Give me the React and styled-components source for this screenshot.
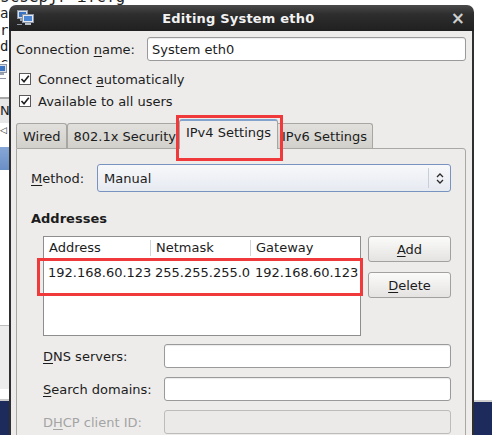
import React from 'react';
import styled, { createGlobalStyle } from 'styled-components';

const Global = createGlobalStyle`
  html, body { margin: 0; padding: 0; background: #fff; }
  body {
    width: 492px; height: 435px; overflow: hidden;
    font-family: "DejaVu Sans", "Liberation Sans", sans-serif;
    font-size: 13px; color: #1c1c1c;
  }
`;

const Desktop = styled.div`
  width: 492px; height: 435px; overflow: hidden;
  display: flex; flex-direction: column; background: #fff;
`;

const TermTop = styled.div`
  height: 5px; overflow: hidden; flex: none;
  font-family: "DejaVu Sans Mono", "Liberation Mono", monospace;
  font-size: 16px; line-height: 16px; color: #222; white-space: pre;
  span { display: block; margin-top: -11px; }
`;

const Stage = styled.div`
  display: flex; flex: 1; min-height: 0; overflow: hidden;
`;

const LeftStrip = styled.div`
  width: 9px; flex: none; overflow: hidden;
  display: flex; flex-direction: column;
`;

const TermLines = styled.div`
  height: 57px; overflow: hidden; flex: none;
  font-family: "DejaVu Sans Mono", "Liberation Mono", monospace;
  font-size: 14px; line-height: 16.5px; color: #222; white-space: pre;
`;

const Band = styled.div`
  flex: ${p => (p.$fill ? '1' : 'none')};
  height: ${p => (p.$h ? `${p.$h}px` : 'auto')};
  background: ${p => p.$bg || '#fff'};
  overflow: hidden;
  font-size: 13px; line-height: ${p => (p.$h ? `${p.$h}px` : 'normal')};
  color: #222;
`;

const RightStrip = styled.div`
  flex: 1; display: flex; flex-direction: column;
`;

const Window = styled.div`
  width: 465px; flex: none; display: flex; flex-direction: column;
  overflow: hidden;
`;

const TitleBar = styled.div`
  height: 26px; flex: none;
  display: flex; align-items: center;
  padding: 0 9px 0 8px;
  border-radius: 7px 7px 0 0;
  background: linear-gradient(#4a4a4a 0%, #2e2e2e 35%, #202020 100%);
`;

const TitleText = styled.div`
  flex: 1; text-align: center;
  color: #f2f2f2; font-weight: bold; font-size: 13px;
  letter-spacing: 0.2px;
  padding-right: 8px;
`;

const Close = styled.div`
  color: #cfcfcf; font-size: 17px; font-weight: bold; line-height: 1;
  margin-top: 1px;
`;

const Body = styled.div`
  flex: 1;
  background: #edeceb;
  border-left: 2px solid #2f2f2f;
  border-right: 2px solid #2f2f2f;
  padding: 6px 6px 0 5px;
  display: flex; flex-direction: column;
`;

const FormRow = styled.div`
  display: flex; align-items: center; height: ${p => p.$h || 24}px;
`;

const Label = styled.div`
  width: ${p => p.$w}px; flex: none; white-space: nowrap;
  color: ${p => (p.$disabled ? '#a4a4a4' : '#1c1c1c')};
  font-weight: ${p => (p.$bold ? 'bold' : 'normal')};
`;

const Mn = styled.span`
  text-decoration: underline; text-underline-offset: 2px;
`;

const Entry = styled.div`
  flex: 1; height: 24px; box-sizing: border-box;
  border: 1px solid ${p => (p.$disabled ? '#bdbcba' : '#9a9a9a')};
  border-radius: 3px;
  background: ${p => (p.$disabled ? '#ebeae8' : '#fff')};
  box-shadow: ${p => (p.$disabled ? 'none' : 'inset 0 1px 1px rgba(0,0,0,0.08)')};
  display: flex; align-items: center; padding-left: 4px;
  white-space: nowrap;
`;

const Spacer = styled.div`
  height: ${p => p.$h}px; flex: none;
`;

const CheckRow = styled.div`
  display: flex; align-items: center; height: 22px; padding-left: 3px; gap: 7px;
`;

const Box = styled.div`
  width: 12px; height: 12px; box-sizing: border-box;
  border: 1px solid #5a5a5a; background: #fff;
  display: flex; align-items: center; justify-content: center;
`;

const Notebook = styled.div`
  margin-top: 7px; display: flex; flex-direction: column;
`;

const TabStrip = styled.div`
  display: flex; align-items: flex-end; height: 29px;
`;

const Tab = styled.div`
  position: relative; box-sizing: border-box; white-space: nowrap;
  border: 1px solid #a7a6a3; border-bottom: none;
  border-radius: 3px 3px 0 0;
  ${p => p.$active ? `
    z-index: 2;
    height: 30px; margin: 0 -3px -1px -3px; padding: 0 6px 0 6px;
    border-top: 2px solid #84a3cc;
    background: #edeceb;
    line-height: 24px;
  ` : `
    z-index: 1;
    height: 25px; padding: 0 5px 0 6px;
    background: linear-gradient(#e2e0dc, #d2d0cb);
    line-height: 25px;
  `}
`;

const Annotation = styled.div`
  position: absolute; box-sizing: border-box;
  border: 3px solid #f0393b;
  left: ${p => p.$l}px; right: ${p => p.$r}px; top: ${p => p.$t}px; height: ${p => p.$h}px;
  pointer-events: none; z-index: 5;
`;

const Panel = styled.div`
  border: 1px solid #a9a8a5; border-radius: 0 3px 0 0;
  background: #edeceb;
  padding: 15px 14px 30px 14px;
  display: flex; flex-direction: column;
`;

const Combo = styled.div`
  flex: 1; height: 28px; box-sizing: border-box;
  border: 1px solid #7893bf; border-radius: 3px;
  background: linear-gradient(#f7f8fa, #e6eaf1);
  display: flex; align-items: center;
`;

const ComboText = styled.div`
  flex: 1; padding-left: 6px;
`;

const ComboSep = styled.div`
  width: 1px; height: 20px; background: #c9cfd8;
`;

const ComboArrows = styled.div`
  width: 21px; display: flex; align-items: center; justify-content: center;
`;

const Heading = styled.div`
  margin-top: 19px; font-weight: bold; line-height: 16px;
`;

const AddrRow = styled.div`
  margin-top: 9px; padding-left: 12px; display: flex; gap: 7px;
`;

const Table = styled.div`
  position: relative; width: 318px; height: 100px; box-sizing: border-box;
  border: 1px solid #8e8e8e; background: #fff;
`;

const TRow = styled.div`
  display: grid; grid-template-columns: 107px 100px 1fr;
  height: ${p => p.$h}px; align-items: center;
  white-space: nowrap;
`;

const HCell = styled.div`
  height: 16px; line-height: 16px; padding-left: 5px;
  border-right: ${p => (p.$last ? 'none' : '1px solid #d4d4d4')};
`;

const DCell = styled.div`
  padding-left: 4px; overflow: hidden;
`;

const ButtonCol = styled.div`
  width: 83px; display: flex; flex-direction: column; gap: 10px;
`;

const Button = styled.div`
  height: 26px; box-sizing: border-box;
  border: 1px solid #a2a1a0; border-radius: 3px;
  background: linear-gradient(#fbfbfa, #e4e3e1);
  display: flex; align-items: center; justify-content: center;
`;

const FieldGrid = styled.div`
  margin-top: 8px; padding-left: 12px;
  display: grid; grid-template-columns: 121px 1fr; row-gap: 9px;
  align-items: center;
`;

const Tiny = styled.span`
  font-size: 9px;
`;

const NetIcon = () => (
  <svg width="17" height="16" viewBox="0 0 17 16">
    <rect x="0.5" y="0.5" width="10" height="8" fill="#d9dee6" stroke="#8d97a6" />
    <rect x="2" y="2" width="7" height="5" fill="#3c74c4" />
    <rect x="3" y="9" width="5" height="2" fill="#9aa3b0" />
    <rect x="5.5" y="4.5" width="11" height="8" fill="#e6e9ee" stroke="#8d97a6" />
    <rect x="7" y="6" width="8" height="5" fill="#4a86d4" />
    <rect x="8" y="13" width="6" height="2" fill="#b9bfc8" />
    <path d="M0 14.5h5" stroke="#8d97a6" />
  </svg>
);

const MiniNet = () => (
  <svg width="9" height="20" viewBox="0 0 9 20">
    <rect x="-3.5" y="2.5" width="10" height="8" fill="#d9dee6" stroke="#8d97a6" />
    <rect x="-2" y="4" width="7" height="5" fill="#3c74c4" />
    <rect x="-1" y="11" width="5" height="2" fill="#9aa3b0" />
    <path d="M0 16.5h6" stroke="#8d97a6" />
  </svg>
);

const Check = () => (
  <svg width="10" height="10" viewBox="0 0 10 10">
    <path d="M1.5 5 L4 7.8 L8.8 1.8" fill="none" stroke="#1e1e1e" strokeWidth="1.6" />
  </svg>
);

const UpDown = () => (
  <svg width="8" height="13" viewBox="0 0 8 13">
    <path d="M1 5 L4 2 L7 5 M1 8 L4 11 L7 8" fill="none" stroke="#2a2a2a" strokeWidth="1.3" />
  </svg>
);

export default function App() {
  return (
    <>
      <Global />
      <Desktop>
        <TermTop><span>scsepjr ifcfg</span></TermTop>
        <Stage>
          <LeftStrip>
            <TermLines>{'a\nr\nd\nc'}</TermLines>
            <Band $h={20}><MiniNet /></Band>
            <Band $h={15} />
            <Band $h={2} $bg="#a8a8a8" />
            <Band $h={24} $bg="#e7e7e7">N</Band>
            <Band $h={12} $bg="#fff"><Tiny>◁</Tiny></Band>
            <Band $h={12} />
            <Band $h={23} $bg="linear-gradient(#86a6d6, #6a8fc7)" />
            <Band $h={155} />
            <Band $h={1} $bg="#bdbdbd" />
            <Band $h={63} $bg="#ececec" />
            <Band $h={10} />
            <Band $h={2} $bg="#c9c9c9" />
            <Band $fill $bg="#1c2a5c" />
          </LeftStrip>

          <Window>
            <TitleBar>
              <NetIcon />
              <TitleText>Editing System eth0</TitleText>
              <Close>×</Close>
            </TitleBar>
            <Body>
              <FormRow>
                <Label $w={131}>Connection <Mn>n</Mn>ame:</Label>
                <Entry>System eth0</Entry>
              </FormRow>
              <Spacer $h={7} />
              <CheckRow>
                <Box><Check /></Box>
                <span>Connect <Mn>a</Mn>utomatically</span>
              </CheckRow>
              <CheckRow>
                <Box><Check /></Box>
                <span>Available to all users</span>
              </CheckRow>

              <Notebook>
                <TabStrip>
                  <Tab>Wired</Tab>
                  <Tab>802.1x Security</Tab>
                  <Tab $active>
                    IPv4 Settings
                    <Annotation $l={-4} $r={-6} $t={-6} $h={46} />
                  </Tab>
                  <Tab>IPv6 Settings</Tab>
                </TabStrip>
                <Panel>
                  <FormRow $h={28}>
                    <Label $w={66}><Mn>M</Mn>ethod:</Label>
                    <Combo>
                      <ComboText>Manual</ComboText>
                      <ComboSep />
                      <ComboArrows><UpDown /></ComboArrows>
                    </Combo>
                  </FormRow>

                  <Heading>Addresses</Heading>

                  <AddrRow>
                    <Table>
                      <TRow $h={21}>
                        <HCell>Address</HCell>
                        <HCell>Netmask</HCell>
                        <HCell $last>Gateway</HCell>
                      </TRow>
                      <TRow $h={28}>
                        <DCell>192.168.60.123</DCell>
                        <DCell>255.255.255.0</DCell>
                        <DCell>192.168.60.123</DCell>
                      </TRow>
                      <Annotation $l={-7} $r={-3} $t={21} $h={38} />
                    </Table>
                    <ButtonCol>
                      <Button><span><Mn>A</Mn>dd</span></Button>
                      <Button><span><Mn>D</Mn>elete</span></Button>
                    </ButtonCol>
                  </AddrRow>

                  <FieldGrid>
                    <Label><Mn>D</Mn>NS servers:</Label>
                    <Entry />
                    <Label><Mn>S</Mn>earch domains:</Label>
                    <Entry />
                    <Label $disabled>D<Mn>H</Mn>CP client ID:</Label>
                    <Entry $disabled />
                  </FieldGrid>
                </Panel>
              </Notebook>
            </Body>
          </Window>

          <RightStrip>
            <Band $fill />
            <Band $h={2} $bg="#cfcfcf" />
            <Band $h={33} $bg="#1c2a5c" />
          </RightStrip>
        </Stage>
      </Desktop>
    </>
  );
}
